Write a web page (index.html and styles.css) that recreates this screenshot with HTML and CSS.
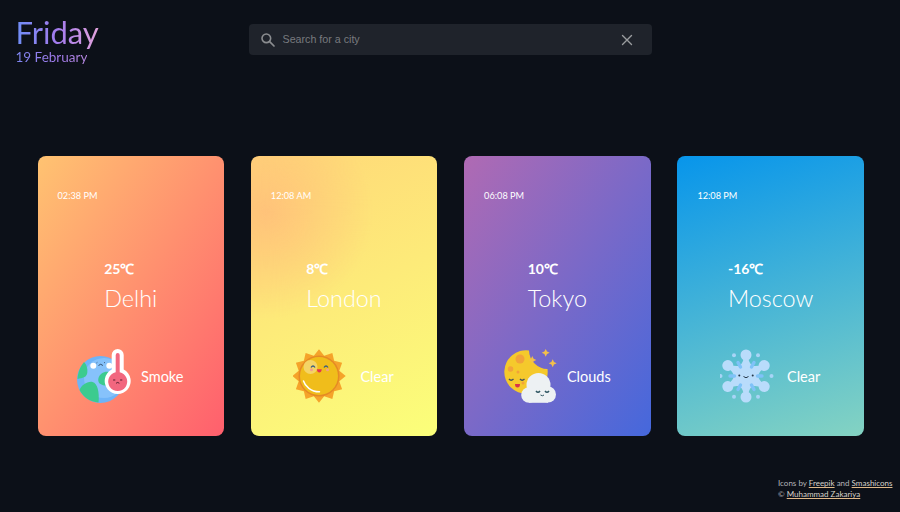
FILE: index.html
```html
<!DOCTYPE html>
<html lang="en">
<head>
<meta charset="utf-8">
<title>Weather</title>
<link rel="stylesheet" href="styles.css">
</head>
<body>
<header class="top">
  <div class="date-block">
    <h1 class="day">Friday</h1>
    <p class="date">19 February</p>
  </div>
  <div class="search">
    <svg class="search-icon" viewBox="0 0 24 24" width="16" height="16"><circle cx="9.5" cy="9.5" r="6.5" fill="none" stroke="#8b8d90" stroke-width="2.4"/><path d="M14.5 14.5 21 21" stroke="#8b8d90" stroke-width="2.6" stroke-linecap="round"/></svg>
    <span class="placeholder">Search for a city</span>
    <svg class="clear-icon" viewBox="0 0 12 12" width="12" height="12"><path d="M1.5 1.5 10.5 10.5M10.5 1.5 1.5 10.5" stroke="#9a9c9f" stroke-width="1.4" stroke-linecap="round"/></svg>
  </div>
  <div></div>
</header>

<main class="cards">
  <article class="card delhi">
    <time class="time">02:38 PM</time>
    <div class="place"><div class="temp">25℃</div><div class="city">Delhi</div></div>
    <div class="cond gap-s">
      <svg class="icon" viewBox="0 0 54 54" width="54" height="54">
        <circle cx="23.5" cy="30.5" r="23.5" fill="#6eb4f8"/>
        <circle cx="27" cy="29" r="20" fill="#86c2fb"/>
        <path d="M7 13c3 3 4 8 3 12-1 3-4 4-9.500 5C1 23 3 18 7 13z" fill="#3ccb8f"/>
        <path d="M2.500 41c2-5 8-9 13-8 5 1 7 10 6 20.500C13 53 6 48 2.500 41z" fill="#3ccb8f"/>
        <path d="M21.500 29c1-4 6-7 10-6s5 6 3 10-6 4-9 3-5-3-4-7z" fill="#3ccb8f"/>
        <circle cx="16.3" cy="16.7" r="3" fill="#fff"/><circle cx="32.3" cy="16.7" r="3" fill="#fff"/>
        <path d="M21.500 16.500q2.200-2.500 4.400 0" stroke="#36506b" stroke-width="1" fill="none"/>
        <path d="M19.500 14l.8-.6M27.200 13.400l.8.6" stroke="#36506b" stroke-width="1" fill="none"/>
        <path d="M34.700 6a6 6 0 0 1 12 0V20.500a13 13 0 1 1-12 0z" fill="#fff"/>
        <path d="M38.700 6a2 2 0 0 1 4 0V23.300a9.500 9.500 0 1 1-4 0z" fill="#f2677f"/>
        <path d="M36.500 31h1.400M43.500 31h1.400M39.300 34q1.400-1.400 2.800 0" stroke="#5a1f30" stroke-width="1" fill="none" stroke-linecap="round"/>
      </svg>
      <span class="label">Smoke</span>
    </div>
  </article>

  <article class="card london">
    <time class="time">12:08 AM</time>
    <div class="place"><div class="temp">8℃</div><div class="city">London</div></div>
    <div class="cond gap-l">
      <svg class="icon" viewBox="1 0 54 54" width="54" height="54">
        <polygon points="27,.3 32.18,6.68 40.35,3.88 42.14,11.86 50.12,13.65 47.32,21.82 53.7,27 47.32,32.18 50.12,40.35 42.14,42.14 40.35,50.12 32.18,47.32 27,53.7 21.82,47.32 13.65,50.12 11.86,42.14 3.88,40.35 6.68,32.18 .3,27 6.68,21.82 3.88,13.65 11.86,11.86 13.65,3.88 21.82,6.68" fill="#f5a32a"/>
        <circle cx="27" cy="27" r="20.5" fill="#e58a25"/>
        <circle cx="27" cy="27" r="19" fill="#f0bd1b"/>
        <circle cx="18.5" cy="18" r="7" fill="#f4d466"/>
        <path d="M11.500 32C13 37 19 43 27.500 42.800" stroke="#fff" stroke-width="1.500" fill="none" stroke-linecap="round"/>
        <path d="M19 18.500q2-3 4 0M32 18.500q2-3 4 0" stroke="#3a5d80" stroke-width="1.300" fill="none"/>
        <circle cx="19.500" cy="20.800" r="1.500" fill="#f3a08a"/><circle cx="35.500" cy="20.800" r="1.500" fill="#f3a08a"/>
        <path d="M24.800 20.300h5q-.5 3.200-2.500 3.200T24.800 20.300z" fill="#e5344e"/>
      </svg>
      <span class="label">Clear</span>
    </div>
  </article>

  <article class="card tokyo">
    <time class="time">06:08 PM</time>
    <div class="place"><div class="temp">10℃</div><div class="city">Tokyo</div></div>
    <div class="cond gap-m">
      <svg class="icon" viewBox="0 0 54 54" width="54" height="54">
        <path d="M26 1.500A21.700 21.700 0 1 0 44.500 20 19 19 0 0 1 26 1.500z" fill="#f5c92c"/>
        <circle cx="17" cy="10" r="4.500" fill="#f2a33a"/><circle cx="7.500" cy="20" r="2.800" fill="#f2a33a"/><circle cx="15" cy="23" r="1.500" fill="#f2a33a"/><circle cx="20" cy="34" r="1.500" fill="#f2a33a"/>
        <path d="M6 30q2 2.500 4.500 0M17 30q2 2.500 4.500 0" stroke="#40505a" stroke-width="1.300" fill="none"/>
        <path d="M12 35h5q0 3.500-2.500 3.500T12 35z" fill="#d8344a"/>
        <path d="M29.300 7l1.300 2.700 2.700 1.300-2.700 1.300-1.300 2.700-1.300-2.700-2.700-1.300 2.700-1.300zM42.700 0l1.300 2.400 2.700 1.300-2.700 1.300-1.300 2.700-1.300-2.700-2.700-1.300 2.700-1.300zM49.700 10.300l1.300 2.700 2.700 1.300-2.700 1.300-1.300 2.700-1.300-2.700-2.700-1.300 2.700-1.300z" fill="#f3c04a"/>
        <g fill="#edf1f3"><circle cx="35.500" cy="36" r="12"/><circle cx="26" cy="46" r="7.800"/><circle cx="45" cy="45.500" r="8"/><rect x="26" y="40" width="19" height="13.800"/></g>
        <path d="M33 42q2 2.500 4 0M42 42q2 2.500 4 0" stroke="#2f5662" stroke-width="1.500" fill="none"/>
        <path d="M37.500 46q2 1.500 3.500 0" stroke="#2f5662" stroke-width="1" fill="none"/>
      </svg>
      <span class="label">Clouds</span>
    </div>
  </article>

  <article class="card moscow">
    <time class="time">12:08 PM</time>
    <div class="place"><div class="temp">-16℃</div><div class="city">Moscow</div></div>
    <div class="cond gap-l">
      <svg class="icon" viewBox="1 0 54 54" width="54" height="54">
        <g fill="#a8d4f6">
          <circle cx="15" cy="6.300" r="2"/><circle cx="39" cy="6.300" r="2"/><circle cx="1.500" cy="27" r="2"/><circle cx="52.500" cy="27" r="2"/><circle cx="15" cy="47.700" r="2"/><circle cx="39" cy="47.700" r="2"/>
        </g>
        <g fill="#b9dcfb">
          <circle cx="27" cy="27" r="12.500"/>
          <g id="arm"><path d="M20 18Q24.700 13 24.700 8h4.600Q29.300 13 34 18z"/><circle cx="27" cy="6" r="5.500"/></g>
          <g transform="rotate(60 27 27)"><path d="M20 18Q24.700 13 24.700 8h4.600Q29.300 13 34 18z"/><circle cx="27" cy="6" r="5.500"/></g>
          <g transform="rotate(120 27 27)"><path d="M20 18Q24.700 13 24.700 8h4.600Q29.300 13 34 18z"/><circle cx="27" cy="6" r="5.500"/></g>
          <g transform="rotate(180 27 27)"><path d="M20 18Q24.700 13 24.700 8h4.600Q29.300 13 34 18z"/><circle cx="27" cy="6" r="5.500"/></g>
          <g transform="rotate(240 27 27)"><path d="M20 18Q24.700 13 24.700 8h4.600Q29.300 13 34 18z"/><circle cx="27" cy="6" r="5.500"/></g>
          <g transform="rotate(300 27 27)"><path d="M20 18Q24.700 13 24.700 8h4.600Q29.300 13 34 18z"/><circle cx="27" cy="6" r="5.500"/></g>
        </g>
        <g stroke="#7fc2f8" stroke-width="3.400" stroke-linecap="round"><path d="M19 13.500l2.500 4.500M35 13.500l-2.500 4.500M11 27h4.500M38.500 27H43M19 40.500l2.500-4.500M35 40.500l-2.500-4.500"/></g>
        <circle cx="20.300" cy="26.500" r="1" fill="#26384a"/><circle cx="33.700" cy="26.500" r="1" fill="#26384a"/>
        <path d="M24.500 27.500q2.500 2.500 5 0" stroke="#26384a" stroke-width="1" fill="none"/>
      </svg>
      <span class="label">Clear</span>
    </div>
  </article>
</main>

<footer class="credits">
  <p>Icons by <a href="#">Freepik</a> and <a href="#">Smashicons</a></p>
  <p>© <a href="#">Muhammad Zakariya</a></p>
</footer>
</body>
</html>
```
FILE: styles.css
```css
* { box-sizing: border-box; }
html, body { margin: 0; height: 100%; }
body {
  background: #0c1018;
  font-family: Lato, "Liberation Sans", sans-serif;
  color: #fff;
  display: flex;
  flex-direction: column;
  height: 512px;
  overflow: hidden;
}
.top {
  display: grid;
  grid-template-columns: 1fr 403px 1fr;
  padding: 0 15.5px;
  height: 156px;
}
.date-block { padding-top: 15px; }
.day {
  margin: 0;
  font-size: 31px;
  line-height: 34px;
  font-weight: 400;
  width: max-content;
  background: linear-gradient(90deg, #6f8ef6, #a47bee 50%, #e3a3dc);
  -webkit-background-clip: text;
  background-clip: text;
  color: transparent;
}
.date {
  margin: 0;
  font-size: 13.5px;
  line-height: 17px;
  width: max-content;
  white-space: nowrap;
  background: linear-gradient(90deg, #7d86f0, #a47bee 60%, #b98ae2);
  -webkit-background-clip: text;
  background-clip: text;
  color: transparent;
}
.search {
  margin-top: 24px;
  height: 31px;
  background: #1f232b;
  border-radius: 4px;
  display: flex;
  align-items: center;
  padding: 0 19px 0 11px;
}
.search-icon { flex: none; }
.placeholder {
  flex: 1;
  margin-left: 7px;
  padding-bottom: 2px;
  font-family: "Liberation Sans", Arial, sans-serif;
  font-size: 10.7px;
  color: #787a7e;
}
.clear-icon { flex: none; }
.cards {
  display: flex;
  gap: 26.8px;
  padding-left: 37.5px;
}
.card {
  flex: none;
  width: 186.5px;
  height: 280px;
  border-radius: 8px;
  padding: 34px 20px 0;
  display: flex;
  flex-direction: column;
}
.delhi { background: linear-gradient(to bottom right, #ffc371, #ff5f6d); }
.london {
  background:
    radial-gradient(circle at 8% 20%, rgba(255, 190, 122, .85), rgba(255, 190, 122, 0) 38%),
    linear-gradient(155deg, #ffd778, #fbff7a);
}
.tokyo { background: linear-gradient(to bottom right, #b06ab3, #4568dc); }
.moscow { background: linear-gradient(163deg, #0795eb, #84d3c2); }
.time { font-size: 9.2px; line-height: 12px; }
.place { align-self: center; margin-top: 58px; }
.temp { font-size: 14px; line-height: 17px; font-weight: 700; }
.city { font-size: 23.4px; line-height: 28px; font-weight: 300; margin-top: 7px; }
.cond {
  margin: 37px 1px 0 0;
  align-self: center;
  display: flex;
  align-items: center;
}
.gap-s { gap: 10px; }
.gap-m { gap: 10px; }
.gap-l { gap: 13px; }
.icon { flex: none; display: block; }
.label { font-size: 14.5px; line-height: 17px; }
.credits {
  margin-top: auto;
  padding: 0 7px 12px 0;
  font-size: 8px;
  line-height: 11px;
  color: #b4b5b8;
  align-self: flex-end;
  width: max-content;
  min-width: 122px;
}
.credits p { margin: 0; white-space: nowrap; }
.credits a { color: #d6d2ca; text-decoration: underline; text-decoration-color: #e0b98a; }
```
